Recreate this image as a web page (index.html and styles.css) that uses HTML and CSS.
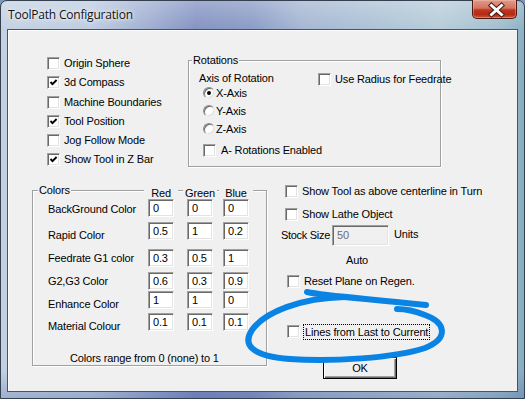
FILE: index.html
```html
<!DOCTYPE html>
<html>
<head>
<meta charset="utf-8">
<title>ToolPath Configuration</title>
<link rel="stylesheet" href="styles.css">
</head>
<body>
<div class="window">
  <div class="titlebar">
    <span class="title">ToolPath Configuration</span>
    <div class="close">
      <svg width="45" height="19" viewBox="0 0 45 19">
        <path d="M18.5 5.5 L28.5 14.5 M28.5 5.5 L18.5 14.5" stroke="#4a1a14" stroke-width="5" stroke-linecap="square" fill="none"/>
        <path d="M18.5 5.5 L28.5 14.5 M28.5 5.5 L18.5 14.5" stroke="#fff" stroke-width="3" stroke-linecap="square" fill="none"/>
      </svg>
    </div>
  </div>
  <div class="client">
    <div class="top">
      <div class="checklist">
        <label class="cb"><span class="box"></span>Origin Sphere</label>
        <label class="cb"><span class="box checked"><svg width="9" height="9" viewBox="0 0 9 9"><path d="M1.5 4 L3.5 6.2 L7.6 2" stroke="#000" stroke-width="1.9" fill="none"/></svg></span>3d Compass</label>
        <label class="cb"><span class="box"></span>Machine Boundaries</label>
        <label class="cb"><span class="box checked"><svg width="9" height="9" viewBox="0 0 9 9"><path d="M1.5 4 L3.5 6.2 L7.6 2" stroke="#000" stroke-width="1.9" fill="none"/></svg></span>Tool Position</label>
        <label class="cb"><span class="box"></span>Jog Follow Mode</label>
        <label class="cb"><span class="box checked"><svg width="9" height="9" viewBox="0 0 9 9"><path d="M1.5 4 L3.5 6.2 L7.6 2" stroke="#000" stroke-width="1.9" fill="none"/></svg></span>Show Tool in Z Bar</label>
      </div>
      <div class="group rotations">
        <div class="group-head"><span class="legend">Rotations</span></div>
        <div class="rot-body">
          <div class="axis">
            <div class="axis-title">Axis of Rotation</div>
            <label class="rb first"><span class="radio on"></span>X-Axis</label>
            <label class="rb"><span class="radio"></span>Y-Axis</label>
            <label class="rb"><span class="radio"></span>Z-Axis</label>
            <label class="cb arot"><span class="box"></span>A- Rotations Enabled</label>
          </div>
          <label class="cb radius"><span class="box"></span>Use Radius for Feedrate</label>
        </div>
      </div>
    </div>
    <div class="bottom">
      <div class="group colors">
        <div class="cgrid">
          <span class="legend clegend">Colors</span>
          <span class="hdr">Red</span>
          <span class="hdr">Green</span>
          <span class="hdr">Blue</span>

          <span class="lbl">BackGround Color</span>
          <span class="inp">0</span><span class="inp">0</span><span class="inp">0</span>

          <span class="lbl dn">Rapid Color</span>
          <span class="inp">0.5</span><span class="inp">1</span><span class="inp">0.2</span>

          <span class="lbl up">Feedrate G1 color</span>
          <span class="inp">0.3</span><span class="inp">0.5</span><span class="inp">1</span>

          <span class="lbl up">G2,G3 Color</span>
          <span class="inp">0.6</span><span class="inp">0.3</span><span class="inp">0.9</span>

          <span class="lbl dn">Enhance Color</span>
          <span class="inp">1</span><span class="inp">1</span><span class="inp">0</span>

          <span class="lbl dn">Material Colour</span>
          <span class="inp">0.1</span><span class="inp">0.1</span><span class="inp">0.1</span>
        </div>
        <div class="note">Colors range from 0 (none) to 1</div>
      </div>
      <div class="right">
        <label class="cb rcb"><span class="box"></span>Show Tool as above centerline in Turn</label>
        <label class="cb rcb lathe"><span class="box"></span>Show Lathe Object</label>
        <div class="stock">
          <span class="stock-lbl">Stock Size</span>
          <span class="inp stock-inp">50</span>
          <span class="units">Units</span>
        </div>
        <div class="auto">Auto</div>
        <label class="cb reset"><span class="box"></span>Reset Plane on Regen.</label>
        <label class="cb lines"><span class="box"></span><span class="focus">Lines from Last to Current</span></label>
        <div class="ok">OK</div>
      </div>
    </div>
  </div>
</div>
<svg class="annot" width="525" height="399" viewBox="0 0 525 399">
  <path d="M307 292 C325 296 360 298 426 305" stroke="#0a84e4" stroke-width="6" stroke-linecap="round" fill="none"/>
  <path d="M345 297 C300 298 265 312 252 330 C242 345 252 356 290 359 C330 362 395 358 425 348 C450 338 445 322 425 315 C415 311 405 309 397 309" stroke="#0a84e4" stroke-width="6" stroke-linecap="round" fill="none"/>
</svg>
</body>
</html>
```
FILE: styles.css
```css
* { box-sizing: border-box; margin: 0; padding: 0; }
html, body { width: 525px; height: 399px; overflow: hidden; }
body {
  position: relative;
  font-family: "Liberation Sans", Arial, sans-serif;
  font-size: 11px;
  letter-spacing: -0.15px;
  color: #000;
  background: #7d97bd;
}
.window {
  width: 525px;
  height: 399px;
  border: 1px solid #34404f;
  border-radius: 7px 7px 0 0;
  display: flex;
  flex-direction: column;
  background:
    linear-gradient(180deg, rgba(255,255,255,.28) 0, rgba(255,255,255,.05) 28px, rgba(255,255,255,0) 60px),
    linear-gradient(180deg, rgba(0,0,0,0) 370px, rgba(40,70,150,.25) 399px),
    linear-gradient(90deg, #c2d0e1 0, #bccbe0 90px, #9aa9cf 150px, #7f8ec0 195px, #8597c3 250px, #a1b3d0 300px, #aac1d4 380px, #b4cad7 440px, #9dbccc 500px, #86acbf 525px);
}
.titlebar {
  height: 28px;
  display: flex;
  justify-content: space-between;
  align-items: flex-start;
}
.title {
  font-family: "Open Sans", "Liberation Sans", sans-serif;
  font-size: 12px;
  letter-spacing: -0.2px;
  line-height: 16px;
  margin: 6px 0 0 7px;
  color: #111;
  text-shadow: 0 0 6px rgba(255,255,255,.9), 0 0 3px rgba(255,255,255,.9);
}
.close {
  width: 45px;
  height: 19px;
  margin: -1px 7px 0 0;
  border: 1px solid #4e1810;
  border-top: none;
  border-radius: 0 0 5px 5px;
  background: linear-gradient(180deg, #e29a88 0, #d27460 45%, #bf3520 55%, #b52a15 80%, #d0583a 100%);
  box-shadow: inset 0 0 0 1px rgba(255,210,200,.35);
}
.close svg { display: block; }
.client {
  flex: 1;
  margin: 0 6px 6px;
  background: #f0f0f0;
  border: 1px solid #48536a;
  box-shadow: inset 1px 1px 0 #fdfdfd;
  display: flex;
  flex-direction: column;
}

/* checkbox / radio */
.cb, .rb {
  display: flex;
  align-items: center;
  height: 13px;
  line-height: 13px;
  white-space: nowrap;
}
.box {
  width: 13px;
  height: 13px;
  flex: none;
  margin-right: 4px;
  background: #fff;
  border: 1px solid;
  border-color: #a0a0a0 #fff #fff #a0a0a0;
  box-shadow: inset 1px 1px 0 #696969, inset -1px -1px 0 #e3e3e3;
  padding: 1px;
}
.box svg { display: block; }
.radio {
  width: 12px;
  height: 12px;
  flex: none;
  margin-right: 1px;
  border-radius: 50%;
  background: #fff;
  border: 1px solid;
  border-color: #8c8c8c #ececec #ececec #8c8c8c;
  box-shadow: inset 1px 1px 0 #6a6a6a, inset -1px -1px 0 #e0e0e0;
  display: flex;
  align-items: center;
  justify-content: center;
}
.radio.on::after {
  content: "";
  width: 4px;
  height: 4px;
  border-radius: 50%;
  background: #000;
}

/* groups */
.group {
  border: 1px solid #a0a0a0;
  box-shadow: 1px 1px 0 #fff, inset 1px 1px 0 #fff;
}
.legend {
  background: #f0f0f0;
  padding: 0 1px;
  line-height: 13px;
}

/* top */
.top {
  display: flex;
  align-items: flex-start;
  padding: 27px 0 0 39px;
}
.checklist {
  width: 141px;
  display: flex;
  flex-direction: column;
  gap: 6.3px;
}
.rotations {
  width: 253px;
  height: 107px;
  margin-top: 3px;
}
.group-head {
  display: flex;
  margin-top: -7px;
  height: 13px;
  padding-left: 3px;
}
.rot-body {
  display: flex;
  align-items: flex-start;
}
.axis {
  width: 129px;
  padding-left: 10px;
  display: flex;
  flex-direction: column;
}
.axis-title { line-height: 13px; margin-top: 4.5px; }
.rb { padding-left: 4px; margin-top: 5px; }
.rb.first { margin-top: 2px; }
.arot { padding-left: 4px; margin-top: 8.5px; }
.arot .box { margin-right: 5px; }
.radius { margin-top: 6px; }

/* bottom */
.bottom {
  display: flex;
  align-items: flex-start;
  margin-top: 18px;
  padding-left: 24px;
}
.colors {
  width: 235px;
  height: 176px;
  margin-top: 5px;
  display: flex;
  flex-direction: column;
}
.cgrid {
  display: grid;
  grid-template-columns: 100px 39px 36px 26px;
  grid-template-rows: 15px 23px 27px 23px 19px 22px 22px;
  margin-top: -7px;
  padding-left: 15px;
  align-items: start;
  justify-items: start;
}
.clegend { margin-left: -10px; }
.hdr {
  width: 34px;
  margin: 2.5px 0 0 -4px;
  text-align: center;
  background: #f0f0f0;
  line-height: 13px;
}
.lbl { line-height: 13px; margin-top: 3.5px; white-space: nowrap; }
.lbl.dn { margin-top: 6.5px; }
.lbl.up { margin-top: 2.5px; }
.inp {
  width: 26px;
  height: 18px;
  line-height: 16px;
  padding-left: 4px;
  background: #fff;
  border: 1px solid;
  border-color: #a0a0a0 #fff #fff #a0a0a0;
  box-shadow: inset 1px 1px 0 #696969, inset -1px -1px 0 #e3e3e3;
  white-space: nowrap;
}
.note {
  margin-top: auto;
  padding-left: 37px;
  line-height: 13px;
}
.right {
  margin-left: 14px;
  display: flex;
  flex-direction: column;
  align-items: flex-start;
}
.rcb { padding-left: 4px; }
.lathe { margin-top: 10px; }
.stock {
  display: flex;
  align-items: center;
  margin-top: 4px;
  line-height: 13px;
}
.stock-lbl { width: 51px; letter-spacing: -0.3px; }
.stock-inp {
  width: 57px;
  height: 21px;
  line-height: 19px;
  background: #f0f0f0;
  color: #6d6d6d;
}
.units { margin-left: 5px; margin-top: -2px; }
.auto { margin: 7.5px 0 0 65px; line-height: 13px; }
.reset { padding-left: 6px; margin-top: 8.5px; }
.lines { padding-left: 6px; margin-top: 37px; }
.lines .box { margin-right: 3px; }
.focus {
  border: 1px dotted #000;
  line-height: 14px;
  padding-right: 1px;
  padding-left: 1px;
}
.ok {
  margin: 19px 0 0 42px;
  width: 74px;
  height: 22px;
  line-height: 20px;
  text-align: center;
  border: 1px solid #000;
  background: #f0f0f0;
  box-shadow: inset 1px 1px 0 #fff, inset -1px -1px 0 #696969, inset -2px -2px 0 #a0a0a0;
}
.annot {
  position: absolute;
  top: 0;
  left: 0;
  pointer-events: none;
}
```
